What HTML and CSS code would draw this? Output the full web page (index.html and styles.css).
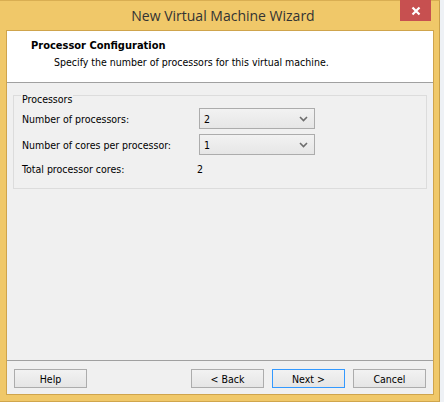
FILE: index.html
```html
<!DOCTYPE html>
<html>
<head>
<meta charset="utf-8">
<link rel="stylesheet" href="styles.css">
</head>
<body>
<div class="window">
  <div class="titlebar">
    <span class="title">New Virtual Machine Wizard</span>
    <span class="close">
      <svg width="10" height="10" viewBox="0 0 10 10"><path d="M1.5 1.5 L8.5 8.5 M8.5 1.5 L1.5 8.5" stroke="#fff" stroke-width="2.2" fill="none"/></svg>
    </span>
  </div>
  <div class="client">
    <div class="header">
      <div class="h-title">Processor Configuration</div>
      <div class="h-sub">Specify the number of processors for this virtual machine.</div>
    </div>
    <div class="body">
      <fieldset class="group">
        <legend>Processors</legend>
        <div class="row first">
          <span class="label">Number of processors:</span>
          <span class="select"><span class="val">2</span><svg class="chev" width="9" height="6" viewBox="0 0 9 6"><path d="M1 1 L4.5 4.5 L8 1" stroke="#6d6d6d" stroke-width="1.6" fill="none"/></svg></span>
        </div>
        <div class="row">
          <span class="label">Number of cores per processor:</span>
          <span class="select"><span class="val">1</span><svg class="chev" width="9" height="6" viewBox="0 0 9 6"><path d="M1 1 L4.5 4.5 L8 1" stroke="#6d6d6d" stroke-width="1.6" fill="none"/></svg></span>
        </div>
        <div class="row total">
          <span class="label tlabel">Total processor cores:</span>
          <span class="tval">2</span>
        </div>
      </fieldset>
    </div>
    <div class="footer">
      <button class="btn">Help</button>
      <div class="grow"></div>
      <button class="btn">&lt; Back</button>
      <button class="btn default">Next &gt;</button>
      <button class="btn">Cancel</button>
    </div>
  </div>
</div>
</body>
</html>
```

FILE: styles.css
```css
html, body {
  margin: 0;
  padding: 0;
  background: #eef1f5;
}
body {
  width: 444px;
  height: 402px;
  overflow: hidden;
}
.window {
  width: 440px;
  height: 402px;
  box-sizing: border-box;
  background: #f0c869;
  border-top: 1px solid #d9ae52;
  border-right: 1px solid #c9a04a;
  border-bottom: 1px solid #d0a64c;
  display: flex;
  flex-direction: column;
  padding: 0 5px 6px 6px;
}
.titlebar {
  height: 29px;
  flex-shrink: 0;
  position: relative;
  display: flex;
  justify-content: center;
  align-items: center;
}
.title {
  font-family: "Open Sans", "Noto Sans", sans-serif;
  font-size: 14px;
  color: #333333;
  margin-top: -1px;
  margin-left: 6px;
}
.close {
  position: absolute;
  top: -1px;
  right: 3px;
  width: 31px;
  height: 21px;
  background: #c75050;
  display: flex;
  align-items: center;
  justify-content: center;
}
.client {
  flex: 1;
  border: 1px solid #cfa44c;
  display: flex;
  flex-direction: column;
  font-family: "DejaVu Sans Condensed", "Liberation Sans", sans-serif;
  font-size: 10.5px;
  color: #000;
  background: #f0f0f0;
}
.header {
  background: #ffffff;
  height: 52px;
  flex-shrink: 0;
  border-bottom: 1px solid #a0a0a0;
  box-sizing: border-box;
  padding: 7px 0 0 24px;
}
.h-title {
  font-weight: bold;
  font-size: 11px;
  line-height: 16px;
}
.h-sub {
  padding-left: 23px;
  line-height: 16px;
}
.body {
  flex: 1;
  padding: 0 6px;
}
.group {
  margin: 1px 0 0 0;
  border: 1px solid #dcdcdc;
  padding: 0 8px 9px 8px;
  min-width: 0;
}
.group legend {
  padding: 8px 1px 0 1px;
  margin-left: -1px;
  line-height: 14px;
}
.row {
  display: flex;
  align-items: center;
  height: 21px;
  margin-top: 5px;
}
.row.first {
  margin-top: 2px;
}
.label {
  width: 177px;
}
.select {
  width: 116px;
  height: 21px;
  box-sizing: border-box;
  border: 1px solid #acacac;
  background: linear-gradient(#f2f2f2, #e6e6e6);
  display: flex;
  align-items: center;
  justify-content: space-between;
  padding: 0 6px 0 4px;
}
.chev {
  display: block;
}
.total {
  margin-top: 3px;
}
.tlabel {
  width: 175px;
}
.footer {
  flex-shrink: 0;
  border-top: 1px solid #a0a0a0;
  padding: 8px 7px 6px 7px;
  display: flex;
  gap: 8px;
}
.grow {
  flex: 1;
}
.btn {
  width: 73px;
  flex-shrink: 0;
  height: 19px;
  margin: 0;
  padding: 0;
  box-sizing: border-box;
  border: 1px solid #acacac;
  background: linear-gradient(#f2f2f2, #e5e5e5);
  font-family: "DejaVu Sans Condensed", "Liberation Sans", sans-serif;
  font-size: 10.5px;
  color: #000;
}
.btn.default {
  border-color: #3399ff;
}
```
